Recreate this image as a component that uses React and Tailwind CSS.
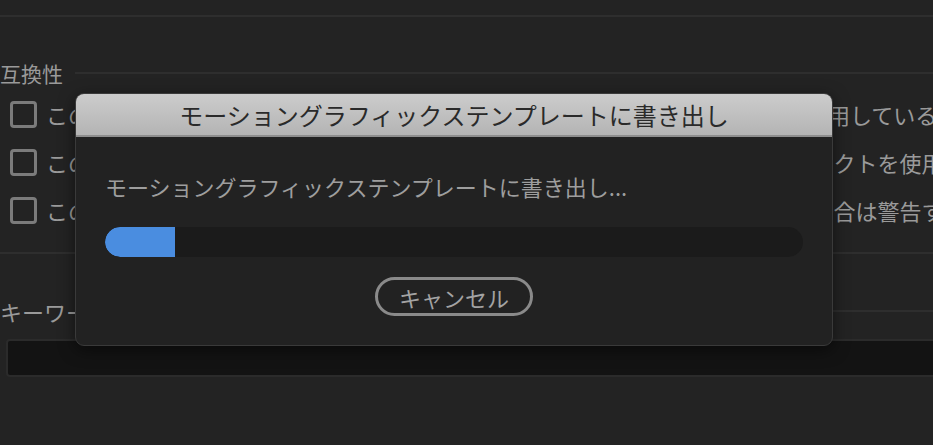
import React from 'react';

const font = { fontFamily: '"Noto Sans CJK JP", "Noto Sans", sans-serif' };

const rows = [
  'このモーショングラフィックステンプレート内で、Typekit 以外のフォントを使用している場合は警告する',
  'このモーショングラフィックステンプレート内で、サードパーティー製のエフェクトを使用している場合は警告する',
  'このモーショングラフィックステンプレートに不明なメディアが含まれている場合は警告する',
];

function Checkbox() {
  return <div className="w-[27px] h-[27px] shrink-0 rounded-[4px] border-[3px] border-[#7b7b7b]" />;
}

export default function App() {
  const progress = 70;

  return (
    <div className="relative w-[933px] h-[445px] overflow-hidden bg-[#232323]" style={font}>
      <div className="mt-[15px] h-[2px] bg-[#2e2e2e]" />

      <div className="mt-[41px] h-[30px] flex items-center">
        <span className="text-[21px] leading-[30px] text-[#9a9a9a] whitespace-nowrap">互換性</span>
        <div className="ml-3 flex-1 h-[2px] bg-[#2e2e2e]" />
      </div>

      <div className="mt-[2px]">
        {rows.map((r, i) => (
          <div key={i} className="h-[48px] flex items-center pl-[10px] gap-[9px]">
            <Checkbox />
            <span className="text-[22px] leading-[30px] text-[#9a9a9a] whitespace-nowrap">{r}</span>
          </div>
        ))}
      </div>

      <div className="mt-[18px] h-[2px] bg-[#2e2e2e]" />

      <div className="mt-[42px] h-[30px] flex items-center">
        <span className="text-[22px] leading-[30px] text-[#9a9a9a] whitespace-nowrap">キーワード</span>
        <div className="ml-3 flex-1 h-[2px] bg-[#2e2e2e]" />
      </div>

      <div className="mt-[13px] ml-[6px] w-[960px] h-[38px] rounded-[4px] border-2 border-[#2b2b2b] bg-[#131313]" />

      {/* export dialog */}
      <div className="absolute left-[75px] top-[93px] w-[758px] h-[253px] rounded-[9px] border border-[#3a3a3a] bg-[#222222] overflow-hidden shadow-[0_4px_16px_rgba(0,0,0,0.5)]">
        <div className="h-[43px] flex items-center justify-center bg-gradient-to-b from-[#cccccc] to-[#b4b4b4] border-b-2 border-[#8e8e8e]">
          <span className="text-[24px] leading-[30px] text-[#2a2a2a]">モーショングラフィックステンプレートに書き出し</span>
        </div>
        <div className="px-[29px] pt-[34px]">
          <div className="text-[22px] leading-[30px] text-[#9e9e9e] whitespace-nowrap">モーショングラフィックステンプレートに書き出し...</div>
          <div className="mt-[26px] h-[30px] rounded-full bg-[#1b1b1b] overflow-hidden">
            <div className="h-full rounded-l-full bg-[#4a8de0]" style={{ width: progress }} />
          </div>
          <div className="mt-[20px] flex justify-center">
            <button className="w-[158px] h-[39px] rounded-full border-[3px] border-[#8a8a8a] text-[22px] leading-[30px] text-[#a3a3a3]">
              キャンセル
            </button>
          </div>
        </div>
      </div>
    </div>
  );
}
